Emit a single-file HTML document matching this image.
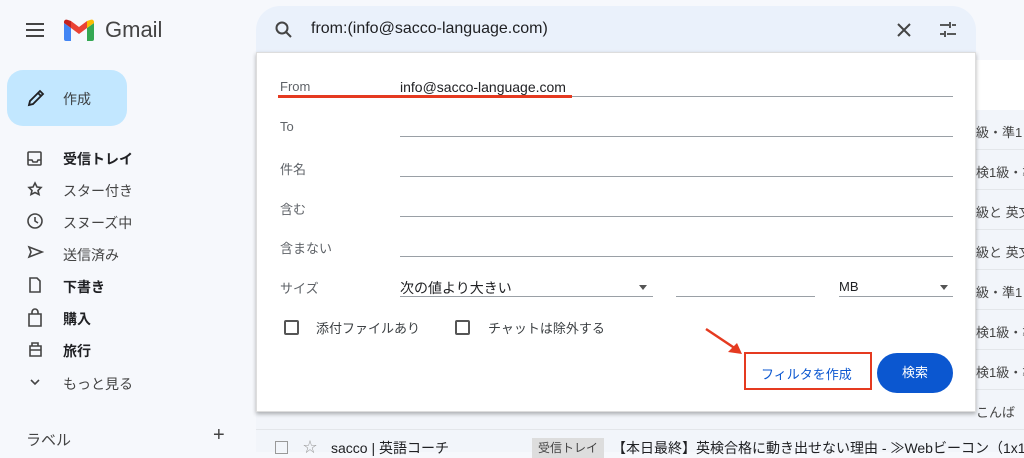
<!DOCTYPE html>
<html><head><meta charset="utf-8"><style>
*{margin:0;padding:0;box-sizing:border-box}
body{width:1024px;height:452px;overflow:hidden;background:#f6f8fc;font-family:"Liberation Sans","Noto Sans CJK JP",sans-serif;position:relative;color:#202124}
.abs{position:absolute}
.navt{position:absolute;left:63px;font-size:14px}
.lbl{position:absolute;left:280px;font-size:13px;color:#5f6368}
.line{position:absolute;left:400px;width:553px;height:1px;background:#9aa0a6}
.row{position:absolute;left:958px;width:66px;height:40px;border-bottom:1px solid #e3e6ea;font-size:13px;color:#444;padding-top:12px;padding-left:18px;background:#f2f5fa;white-space:nowrap;overflow:hidden}
</style></head><body>
<div class="abs" style="left:26px;top:23px;width:18px;height:2px;background:#444;box-shadow:0 6px 0 #444,0 12px 0 #444"></div>
<svg class="abs" style="left:64px;top:19px" width="30" height="22" viewBox="0 0 30 22">
<path d="M0 4v16a2 2 0 0 0 2 2h5V9z" fill="#4285f4"/>
<path d="M30 4v16a2 2 0 0 1-2 2h-5V9z" fill="#34a853"/>
<path d="M23 2v7l7-5V3c0-2-2-3-4-2z" fill="#fbbc04"/>
<path d="M7 9V2l8 6 8-6v7l-8 6z" fill="#ea4335"/>
<path d="M0 3c0-2 2-3 4-2l3 1v7L0 4z" fill="#c5221f"/>
</svg>
<div class="abs" style="left:105px;top:17px;font-size:22px;color:#444">Gmail</div>
<div class="abs" style="left:7px;top:70px;width:120px;height:56px;border-radius:16px;background:#c2e7ff"></div>
<svg class="abs" style="left:26px;top:88px" width="20" height="20" viewBox="0 0 20 20"><path d="M3 17l1-4L14 3l3 3L7 16z M12 5l3 3" fill="none" stroke="#202124" stroke-width="1.8"/></svg>
<div class="abs" style="left:63px;top:89px;font-size:14px;color:#3c4043">作成</div>
<svg class="abs" style="left:26px;top:150px" width="18" height="250" viewBox="0 0 18 250" fill="none" stroke="#444" stroke-width="1.6">
<rect x="2" y="2" width="13" height="13" rx="1"/><path d="M2 10h4l1 2h4l1-2h3"/>
<path d="M9 33l2 4 4 .5-3 3 1 4-4-2-4 2 1-4-3-3 4-.5z"/>
<circle cx="9" cy="71" r="7"/><path d="M9 67v4l3 2"/>
<path d="M3 97l13 5-13 5 2-5z"/>
<path d="M4 128h7l3 3v11H4z"/>
<path d="M3 164h12v12H3z M6 164v-2a3 3 0 0 1 6 0v2"/>
<path d="M4 196h11v10H4z M6 196v-3h6v3 M4 200h11"/>
<path d="M5 230l4 4 4-4"/>
</svg>
<div class="navt" style="top:149px;font-weight:bold">受信トレイ</div>
<div class="navt" style="top:181px;color:#444">スター付き</div>
<div class="navt" style="top:213px;color:#444">スヌーズ中</div>
<div class="navt" style="top:245px;color:#444">送信済み</div>
<div class="navt" style="top:277px;font-weight:bold">下書き</div>
<div class="navt" style="top:309px;font-weight:bold">購入</div>
<div class="navt" style="top:341px;font-weight:bold">旅行</div>
<div class="navt" style="top:374px;color:#444">もっと見る</div>
<div class="abs" style="left:26px;top:429px;font-size:15px;color:#444">ラベル</div>
<div class="abs" style="left:213px;top:424px;font-size:20px;color:#444">+</div>
<div class="abs" style="left:256px;top:60px;width:768px;height:392px;background:#fff"></div>
<div class="row" style="top:110px">級・準1</div>
<div class="row" style="top:150px">検1級・準</div>
<div class="row" style="top:190px">級と 英文</div>
<div class="row" style="top:230px">級と 英文</div>
<div class="row" style="top:270px">級・準1</div>
<div class="row" style="top:310px">検1級・準</div>
<div class="row" style="top:350px">検1級・準</div>
<div class="row" style="top:390px">こんば</div>
<div class="abs" style="left:256px;top:400px;width:710px;height:30px;background:#f2f5fa;border-bottom:1px solid #e3e6ea"></div>
<div class="abs" style="left:256px;top:430px;width:768px;height:22px;background:#f2f5fa"></div>
<div class="abs" style="left:275px;top:441px;width:13px;height:13px;border:1.5px solid #999"></div>
<div class="abs" style="left:303px;top:437px;font-size:14px;color:#999">☆</div>
<div class="abs" style="left:331px;top:438px;font-size:14px;color:#202124">sacco | 英語コーチ</div>
<div class="abs" style="left:532px;top:438px;font-size:12px;background:#ddd;padding:1px 6px;color:#444;height:20px">受信トレイ</div>
<div class="abs" style="left:612px;top:438px;font-size:14px;color:#202124;white-space:nowrap">【本日最終】英検合格に動き出せない理由 - ≫Webビーコン（1x1画</div>
<div class="abs" style="left:256px;top:6px;width:720px;height:48px;border-radius:24px 24px 0 0;background:#eaf1fb"></div>
<svg class="abs" style="left:274px;top:20px" width="20" height="20" viewBox="0 0 20 20" fill="none" stroke="#444" stroke-width="2"><circle cx="8" cy="8" r="5.5"/><path d="M12 12l5 5"/></svg>
<div class="abs" style="left:311px;top:20px;font-size:16px;color:#202124">from:(info@sacco-language.com)</div>
<svg class="abs" style="left:896px;top:22px" width="16" height="16" viewBox="0 0 16 16" stroke="#444" stroke-width="2"><path d="M2 2l12 12M14 2L2 14"/></svg>
<svg class="abs" style="left:938px;top:20px" width="20" height="20" viewBox="0 0 20 20" stroke="#444" stroke-width="1.8"><path d="M2 5h9M14 5h4M12 2v6M2 14h4M9 14h9M7 11v6"/></svg>
<div class="abs" style="left:256px;top:52px;width:720px;height:360px;background:#fff;box-shadow:0 2px 4px rgba(0,0,0,.3);border:1px solid #ddd"></div>
<div class="lbl" style="top:79px">From</div>
<div class="abs" style="left:400px;top:79px;font-size:14px;color:#202124">info@sacco-language.com</div>
<div class="line" style="top:96px"></div>
<div class="abs" style="left:278px;top:95px;width:294px;height:3px;background:#e53a20"></div>
<div class="lbl" style="top:119px">To</div><div class="line" style="top:136px"></div>
<div class="lbl" style="top:159px">件名</div><div class="line" style="top:176px"></div>
<div class="lbl" style="top:199px">含む</div><div class="line" style="top:216px"></div>
<div class="lbl" style="top:238px">含まない</div><div class="line" style="top:256px"></div>
<div class="lbl" style="top:278px">サイズ</div>
<div class="abs" style="left:400px;top:278px;font-size:14px;color:#202124">次の値より大きい</div>
<div class="abs" style="left:639px;top:285px;border:4px solid transparent;border-top:5px solid #555"></div>
<div class="abs" style="left:400px;top:296px;width:253px;height:1px;background:#9aa0a6"></div>
<div class="abs" style="left:676px;top:296px;width:139px;height:1px;background:#9aa0a6"></div>
<div class="abs" style="left:839px;top:279px;font-size:13px;color:#202124">MB</div>
<div class="abs" style="left:940px;top:285px;border:4px solid transparent;border-top:5px solid #555"></div>
<div class="abs" style="left:839px;top:296px;width:114px;height:1px;background:#9aa0a6"></div>
<div class="abs" style="left:284px;top:320px;width:15px;height:15px;border:2px solid #555;border-radius:2px"></div>
<div class="abs" style="left:316px;top:318px;font-size:13px;color:#3c4043">添付ファイルあり</div>
<div class="abs" style="left:455px;top:320px;width:15px;height:15px;border:2px solid #555;border-radius:2px"></div>
<div class="abs" style="left:488px;top:318px;font-size:13px;color:#3c4043">チャットは除外する</div>
<svg class="abs" style="left:700px;top:325px" width="45" height="32" viewBox="0 0 45 32"><path d="M6 4L36 24" stroke="#e53a20" stroke-width="2.5"/><path d="M42 29L28 27L37 18z" fill="#e53a20"/></svg>
<div class="abs" style="left:744px;top:352px;width:128px;height:38px;border:2px solid #e53a20"></div>
<div class="abs" style="left:761px;top:364px;font-size:13px;color:#0b57d0">フィルタを作成</div>
<div class="abs" style="left:877px;top:353px;width:76px;height:40px;border-radius:20px;background:#0b57d0;color:#fff;font-size:13px;text-align:center;line-height:40px">検索</div>
</body></html>
